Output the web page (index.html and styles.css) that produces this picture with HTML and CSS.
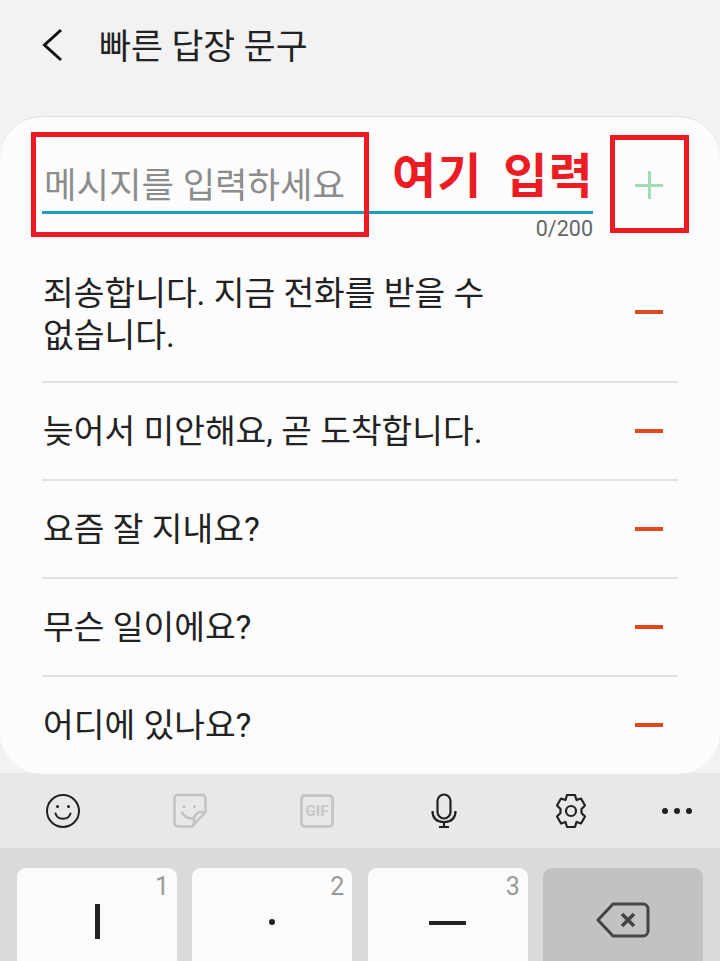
FILE: index.html
```html
<!DOCTYPE html>
<html lang="ko">
<head>
<meta charset="utf-8">
<title>빠른 답장 문구</title>
<link rel="stylesheet" href="styles.css">
</head>
<body>
<div class="screen">
  <header class="header">
    <svg class="back" width="24" height="34" viewBox="0 0 24 34"><path d="M20 2 3.500 17 20 32" fill="none" stroke="#111" stroke-width="3"/></svg>
    <h1 class="title">빠른 답장 문구</h1>
  </header>
  <main class="card">
    <div class="input-row">
      <div class="field">
        <div class="placeholder">메시지를 입력하세요</div>
        <div class="counter">0/200</div>
      </div>
      <div class="sign plus"></div>
    </div>
    <ul class="list">
      <li class="item item-tall"><span class="item-text">죄송합니다. 지금 전화를 받을 수 없습니다.</span><span class="sign minus"></span></li>
      <li class="item"><span class="item-text">늦어서 미안해요, 곧 도착합니다.</span><span class="sign minus"></span></li>
      <li class="item"><span class="item-text">요즘 잘 지내요?</span><span class="sign minus"></span></li>
      <li class="item"><span class="item-text">무슨 일이에요?</span><span class="sign minus"></span></li>
      <li class="item"><span class="item-text">어디에 있나요?</span><span class="sign minus"></span></li>
    </ul>
    <div class="mark mark-input"></div>
    <div class="mark mark-plus"></div>
    <div class="mark-label">여기 입력</div>
  </main>
  <div class="toolbar">
    <div class="tools">
      <svg width="36" height="36" viewBox="0 0 36 36" fill="none" stroke="#222" stroke-width="2"><circle cx="18" cy="18" r="16"/><path d="M10.500 20.500c2 7 13 7 15 0" stroke-linecap="round"/><circle cx="12.500" cy="13.500" r="1.500" fill="#222" stroke="none"/><circle cx="23.500" cy="13.500" r="1.500" fill="#222" stroke="none"/></svg>
      <svg width="36" height="36" viewBox="0 0 36 36" fill="none" stroke="#c2c2c2" stroke-width="2.500" stroke-linejoin="round"><path d="M6 2h24a3.500 3.500 0 0 1 3.500 3.500V19L20 33.500H6A3.500 3.500 0 0 1 2.500 30V5.500A3.500 3.500 0 0 1 6 2z"/><path d="M33.500 19H29a7 7 0 0 0-7 7v7" /><path d="M10 19.500c2 4 6.500 6.500 12 6" stroke-linecap="round"/><circle cx="12" cy="13.500" r="1.500" fill="#c2c2c2" stroke="none"/><circle cx="22.500" cy="13.500" r="1.500" fill="#c2c2c2" stroke="none"/></svg>
      <div class="gif">GIF</div>
      <svg width="36" height="36" viewBox="0 0 36 36" fill="none" stroke="#222" stroke-width="2.200"><rect x="11.500" y="1.500" width="13" height="24" rx="6.500"/><path d="M6.500 18c0 7.500 4.500 11 11.500 11s11.500-3.500 11.500-11"/><path d="M18 29v4M13 34h10"/></svg>
      <svg width="36" height="36" viewBox="0 0 36 36" fill="none" stroke="#222" stroke-width="2.200" stroke-linejoin="round"><path d="M14 2h8l1.500 5 4.500-1.500 4 7-3.500 3.500v4l3.500 3.500-4 7-4.500-1.500-1.500 5h-8l-1.500-5-4.500 1.500-4-7 3.500-3.500v-4L4 12.500l4-7L12.500 7z"/><circle cx="18" cy="18" r="5"/></svg>
    </div>
    <svg width="36" height="36" viewBox="0 0 36 36" fill="#222"><circle cx="6" cy="18" r="3"/><circle cx="18" cy="18" r="3"/><circle cx="30" cy="18" r="3"/></svg>
  </div>
  <div class="keys">
    <div class="key"><span class="num">1</span><span class="glyph-bar"></span></div>
    <div class="key"><span class="num">2</span><span class="glyph-dot"></span></div>
    <div class="key"><span class="num">3</span><span class="glyph-dash"></span></div>
    <div class="key key-dark">
      <svg width="54" height="36" viewBox="0 0 54 36" fill="none" stroke="#444" stroke-width="3" stroke-linejoin="round"><path d="M17 2h30a5 5 0 0 1 5 5v22a5 5 0 0 1-5 5H17L2 18z"/><path d="M26 12l12 12M38 12 26 24" stroke-width="3.500"/></svg>
    </div>
  </div>
</div>
</body>
</html>
```

FILE: styles.css
```css
* { box-sizing: border-box; }
html, body { margin: 0; padding: 0; }
body { font-family: "Roboto", "Noto Sans CJK KR", sans-serif; background: #f2f2f2; }
.screen { width: 720px; height: 961px; overflow: hidden; display: flex; flex-direction: column; background: #f2f2f2; }
.header { height: 116px; flex: none; display: flex; align-items: flex-start; padding: 28px 0 0 41px; }
.back { flex: none; }
.title { margin: -3px 0 0 34px; font-size: 34.700px; line-height: 44px; font-weight: 400; color: #222; }
.card { position: relative; flex: none; height: 658px; background: #fcfcfc; border-top: 1px solid #dedede; border-radius: 42px; padding: 0 42px; overflow: hidden; }
.input-row { height: 124px; display: flex; justify-content: space-between; }
.field { width: 551px; height: 124px; position: relative; }
.placeholder { height: 97px; padding: 45px 0 0 2px; border-bottom: 3px solid #1f9bbd; font-size: 35.300px; line-height: 48px; color: #8c8c8c; white-space: nowrap; }
.counter { text-align: right; font-size: 21.500px; line-height: 30px; color: #666; }
.sign { position: relative; flex: none; width: 28px; height: 28px; }
.sign::before { content: ""; position: absolute; left: 0; right: 0; top: 12px; height: 4px; background: #e0481d; }
.plus { margin: 54px 15px 0 0; }
.plus::before { background: #a2dcb6; top: 12.500px; height: 3px; }
.plus::after { content: ""; position: absolute; top: 0; bottom: 0; left: 12.500px; width: 3px; background: #a2dcb6; }
.list { list-style: none; margin: 0; padding: 0; }
.item { display: flex; justify-content: space-between; align-items: center; height: 98px; border-bottom: 2px solid #e2e2e2; padding: 0 15px 0 1px; color: #222; font-size: 33.400px; line-height: 43px; word-break: keep-all; }
.item:last-child { border-bottom-color: transparent; }
.item-tall { height: 142px; line-height: 42px; }
.item-tall .item-text { margin-top: 8px; }
.item-tall .minus { margin-top: 2px; }
.item-text { width: 470px; }
.mark { position: absolute; border: 5px solid #ed1c24; }
.mark-input { left: 31px; top: 15px; width: 338px; height: 105px; }
.mark-plus { left: 610px; top: 18px; width: 79px; height: 98px; }
.mark-label { position: absolute; left: 392px; top: 27px; font-size: 48px; line-height: 66px; font-weight: 700; color: #ed1c24; letter-spacing: 1px; word-spacing: 8px; white-space: nowrap; }
.toolbar { flex: none; height: 75px; margin-top: -1px; padding: 1px 25px 0 45px; background: #e8e8e8; display: flex; justify-content: space-between; align-items: center; }
.tools { display: flex; align-items: center; gap: 91px; }
.gif { width: 34px; height: 34px; margin: 0 1px; border: 3px solid #c6c6c6; border-radius: 5px; font-size: 15px; font-weight: 700; color: #c6c6c6; display: flex; align-items: center; justify-content: center; }
.keys { flex: 1; background: #dadada; display: grid; grid-template-columns: repeat(4, 160px); column-gap: 15.400px; padding: 20px 0 0 17px; }
.key { position: relative; height: 120px; background: #fbfbfb; border-radius: 9px; display: flex; align-items: flex-start; justify-content: center; padding-top: 32px; }
.key-dark { background: #c2c2c2; padding-top: 34px; }
.num { position: absolute; top: 4px; right: 8px; font-size: 25px; line-height: 30px; color: #999; }
.glyph-bar { width: 5px; height: 35px; background: #222; margin-top: 4px; }
.glyph-dot { width: 6px; height: 6px; border-radius: 50%; background: #222; margin-top: 19px; }
.glyph-dash { width: 37px; height: 4px; background: #222; margin-top: 21px; }
```
